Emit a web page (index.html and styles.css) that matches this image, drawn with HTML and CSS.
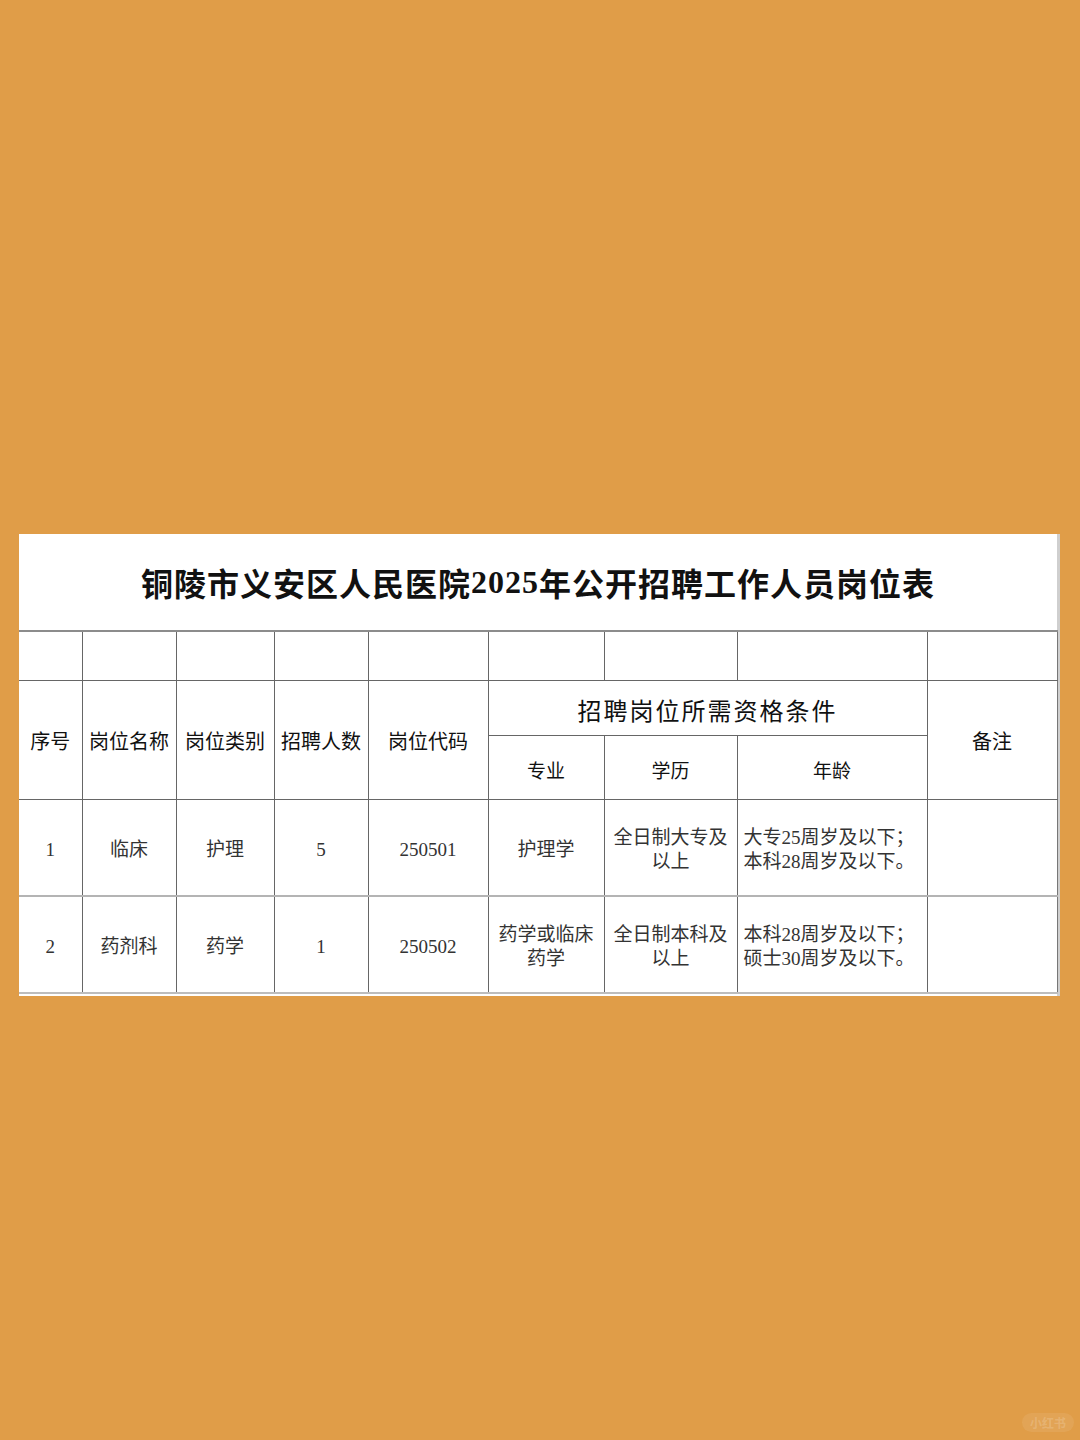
FILE: index.html
```html
<!DOCTYPE html>
<html lang="zh-CN">
<head>
<meta charset="utf-8">
<title>铜陵市义安区人民医院2025年公开招聘工作人员岗位表</title>
<link rel="stylesheet" href="styles.css">
</head>
<body>
<div class="page">
  <div class="sheet">
    <div class="title">铜陵市义安区人民医院<span class="num">2025</span>年公开招聘工作人员岗位表</div>
    <table class="grid">
      <colgroup>
        <col class="c1"><col class="c2"><col class="c3"><col class="c4"><col class="c5">
        <col class="c6"><col class="c7"><col class="c8"><col class="c9">
      </colgroup>
      <tr class="blank">
        <td></td><td></td><td></td><td></td><td></td><td></td><td></td><td></td><td></td>
      </tr>
      <tr class="head1">
        <th rowspan="2">序号</th>
        <th rowspan="2">岗位名称</th>
        <th rowspan="2">岗位类别</th>
        <th rowspan="2">招聘人数</th>
        <th rowspan="2">岗位代码</th>
        <th colspan="3" class="group">招聘岗位所需资格条件</th>
        <th rowspan="2">备注</th>
      </tr>
      <tr class="head2">
        <th class="sub">专业</th>
        <th class="sub">学历</th>
        <th class="sub">年龄</th>
      </tr>
      <tr class="row row1">
        <td>1</td>
        <td>临床</td>
        <td>护理</td>
        <td>5</td>
        <td>250501</td>
        <td>护理学</td>
        <td>全日制大专及<br>以上</td>
        <td class="left">大专25周岁及以下；<br>本科28周岁及以下。</td>
        <td></td>
      </tr>
      <tr class="row row2">
        <td>2</td>
        <td>药剂科</td>
        <td>药学</td>
        <td>1</td>
        <td>250502</td>
        <td>药学或临床<br>药学</td>
        <td>全日制本科及<br>以上</td>
        <td class="left">本科28周岁及以下；<br>硕士30周岁及以下。</td>
        <td></td>
      </tr>
    </table>
    <div class="tail"></div>
  </div>
  <div class="mark">小红书</div>
</div>
</body>
</html>
```
FILE: styles.css
```css
html, body {
  margin: 0;
  padding: 0;
}
body {
  background: #e09d48;
  font-family: "Liberation Serif", "Noto Sans CJK SC", serif;
}
.page {
  position: relative;
  width: 1080px;
  height: 1440px;
  padding-top: 534px;
  box-sizing: border-box;
}
.sheet {
  margin-left: 19px;
  width: 1038px;
  background: #ffffff;
  border-right: 3px solid #cfcfcf;
}
.title {
  height: 96px;
  display: flex;
  align-items: center;
  justify-content: center;
  font-size: 32px;
  font-weight: 700;
  letter-spacing: 1px;
  color: #111;
}
.title .num {
  font-family: "Liberation Serif", serif;
}
.grid {
  width: 1038px;
  table-layout: fixed;
  border-collapse: collapse;
  border-top: 2px solid #8c8c8c;
}
.c1 { width: 63px; }
.c2 { width: 94px; }
.c3 { width: 98px; }
.c4 { width: 94px; }
.c5 { width: 120px; }
.c6 { width: 116px; }
.c7 { width: 133px; }
.c8 { width: 190px; }
.c9 { width: 130px; }
.grid td, .grid th {
  border: 1px solid #666;
  padding: 0;
  text-align: center;
  vertical-align: middle;
  overflow: hidden;
  white-space: nowrap;
}
.grid tr > :first-child {
  border-left: none;
}
.grid tr > :last-child {
  border-right: 1px solid #777;
}
.blank td {
  height: 48px;
}
.grid th {
  font-size: 20px;
  font-weight: 400;
  color: #111;
}
.head1 th.group {
  height: 52px;
  font-size: 24px;
  letter-spacing: 2px;
  padding-top: 2px;
}
.head2 th {
  height: 59px;
}
.head2 th.sub {
  font-size: 19px;
  padding-top: 4px;
}
.row td {
  height: 91px;
  font-size: 19px;
  line-height: 24px;
  color: #333;
  padding-top: 4px;
}
.row1 td {
  border-bottom: 2px solid #b4b4b4;
}
.row2 td {
  border-bottom: 2px solid #bdbdbd;
}
.row td.left {
  text-align: left;
  padding-left: 6px;
}
.tail {
  height: 2px;
}
.mark {
  position: absolute;
  right: 6px;
  bottom: 8px;
  padding: 1px 8px;
  border-radius: 10px;
  background: rgba(255, 255, 255, 0.08);
  color: rgba(255, 255, 255, 0.18);
  font-family: "Noto Sans CJK SC", sans-serif;
  font-size: 12px;
  font-weight: 700;
}
```
